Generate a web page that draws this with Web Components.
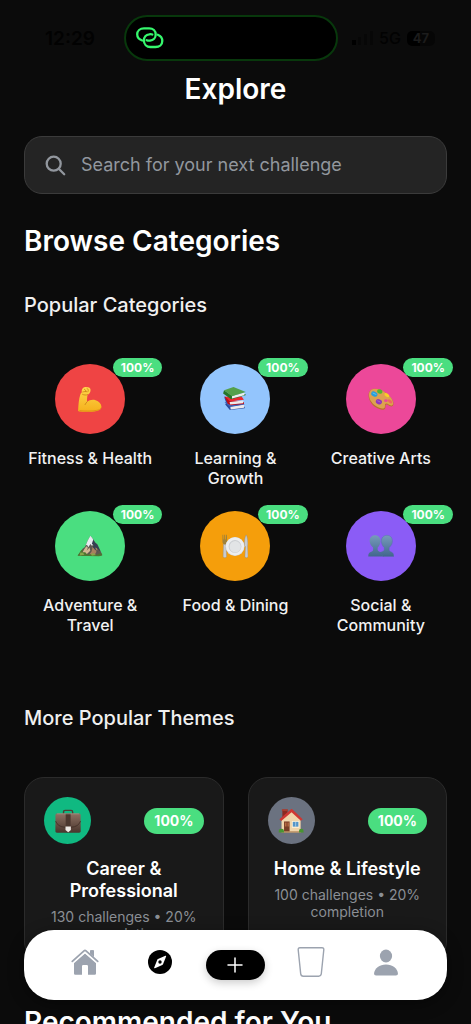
<!DOCTYPE html>
<html lang="en">
<head>
<meta charset="utf-8">
<meta name="viewport" content="width=device-width, initial-scale=1">
<title>Explore</title>
<style>
    html { scrollbar-width: none; background: #0b0b0b; }
    body {
        margin: 0;
        background: #0b0b0b;
        color: #fff;
        font-family: Inter, "Liberation Sans", sans-serif;
    }
</style>
</head>
<body>
<explore-page></explore-page>

<script>
const ART = {
    muscle: `
        <defs><linearGradient id="g" x1="0" y1="0" x2="0" y2="1">
            <stop offset="0" stop-color="#ffd84d"/><stop offset="1" stop-color="#f5b01c"/>
        </linearGradient></defs>
        <path fill="url(#g)" d="M6 2.600C7.400 1 10.600.6 13 1.600c1.500.7 1.900 2.400 1.400 4.300-.4 1.700-1.500 2.800-3 3.400-.5 2.700-.8 5.200-.5 7.700 2.400-1.900 5.800-2.700 9.100-1.700 3.600 1 6.100 3.700 6.300 6.700.2 2.500-1.900 4.200-5 4.800-5.800 1.100-13 1-19 .6-.9-.1-1.200-.7-1.100-1.600.4-6 .8-11.700 2.400-16.600.4-1.300 1-1.900 1.600-2.600-.3-1.400 0-2.800.8-4z"/>
        <path fill="none" stroke="#c47b12" stroke-width=".8" stroke-linecap="round" d="M6.300 6.400c1.500-.4 2.800-.7 4.500-.2M8 3.600c1 .2 1.600 1 1.400 2M10.800 2.600c1.300.6 1.700 1.700 1.200 3.200M6 9c1.800.9 3.800 1 5.300.3M10.900 17c-.9 1-1.600 1.700-2.200 3"/>
        <path fill="none" stroke="#dc9114" stroke-width=".9" stroke-linecap="round" d="M3 26.500c7 .7 13 .6 18.500-.3 2.200-.4 3.900-1.300 4.500-2.700"/>`,
    books: `
        <path fill="#294b9d" d="M2.200 11.500 4.500 18 3.500 20l5 5.900L24.500 24v-1.600L10 19z"/>
        <path fill="#e9e9ec" d="M9 22.200 23.800 20v3.300L9.300 25.200z"/>
        <path fill="#3d63bd" d="m2.700 17.500 6.200 5L24.600 20l-7-3.500z"/>
        <path fill="#b90e18" d="m2.600 11 3.500 8.200 3.600 1.500 14-1.300v-1.800L11 15z"/>
        <path fill="#eceaec" d="m8.200 17.200 14.600-1.700v3l-14 1.300z"/>
        <path fill="#ec2730" d="m3.600 11.700 4.600 4.800 15.400-1.800-2.500-3.500z"/>
        <path fill="#26752a" d="M2.200 4.700 1.200 8l8.600 6.400L25.300 10V8.700L10 10z"/>
        <path fill="#ededee" d="m10.800 10.600 13.700-3.200-.5 2.500-13.300 3.500z"/>
        <path fill="#54a04b" d="M2.200 4.700 12.400 1l13.200 5.500L10.700 11z"/>`,
    palette: `
        <path fill="#b8742b" d="M.8 8C1.800 3.700 6.300 1.800 11.500 3.500c6.400 2 13.200 7.500 15.300 12.700 1.300 3.200.4 6-2 5.800-2-.1-3.200-2.200-5-2-1.800.2-.4 2.400-1.300 4.200-1.200 2.300-5.900 1.500-10.300-1.300C3.200 19.700-.2 13 .8 8z"/>
        <path fill="#dda250" d="M1.200 7.600C2.200 3.500 6.600 2 11.600 3.600c6.200 1.900 12.800 7.200 14.900 12.200 1.200 3 .4 5.400-1.700 5.200-2.200-.2-3.200-2.300-5.200-2.100-2.200.3-.7 2.600-1.600 4.200-1.100 1.900-5.500 1.100-9.500-1.500C3.400 18.500.1 12.500 1.200 7.600z"/>
        <ellipse cx="19.300" cy="15.800" rx="2" ry="1.500" fill="#ec4899"/>
        <ellipse cx="6.800" cy="8.700" rx="3.500" ry="2.600" transform="rotate(25 6.800 8.700)" fill="#279edc"/>
        <ellipse cx="12.700" cy="5.900" rx="2.900" ry="2.300" transform="rotate(20 12.700 5.900)" fill="#55b52d"/>
        <ellipse cx="20.300" cy="9.800" rx="2.900" ry="1.700" transform="rotate(32 20.300 9.800)" fill="#f9cf25"/>
        <ellipse cx="23.700" cy="16.500" rx="2.800" ry="1.600" transform="rotate(38 23.700 16.500)" fill="#f26561"/>
        <ellipse cx="11.700" cy="17" rx="3.400" ry="2.700" transform="rotate(18 11.700 17)" fill="#8f37bb"/>
        <path fill="none" stroke="#6cc5f0" stroke-width=".9" d="m5 7.500 4 1.700"/>
        <path fill="none" stroke="#b66bd4" stroke-width=".8" d="m10 15.800 3.500 1.600"/>`,
    mountain: `
        <path fill="#5d5950" d="M.8 24.300 6 17l2.500-2 3.100-7L14.400 3l2.200 2.600 2.800 4.500 2.500 2.100 5.300 11.200-1.200 1.200z"/>
        <path fill="#e8ebf0" d="m14.400 3-2.800 5-2.300 5.500 1.500-.8 1.300 2.600 2.400-3.500 1.700 2.200 1.300-2.200 3 3.200-1.800-5-2.100-4.400z"/>
        <path fill="#d5b894" d="m10 14.200 1.800 1.800-1.500 3 3.200-3.400.8 3.400-4.500 4.500-5.500.3L7.500 18z"/>
        <path fill="#a7825f" d="m17 14 2 4 1.800-3.500 1.200 3.500-3 5.600h-6l2.800-4z"/>
        <path fill="#344052" d="m17.500 7 2 3.300 2.400 2.300 3.400 7.300-3.700-3.400-2.700-1.500 3.500 6-6-6.500 2-.8-2.400-2z"/>
        <path fill="#4e762f" d="m.6 24.400 4.200-6.200 1.800.4-1 2 3.300.2 2.200 2.300 6.100-.5 3.400 1 5.200-2 1.500 2.300-3.500 1.100z"/>
        <path fill="#88a64a" d="m3.500 21 3 .3 1.500 2.200-5 .7zM15 23l2.500-1.500 3 2.200-4.500.8z"/>`,
    plate: `
        <g fill="#c8cbd0" stroke="#83888e" stroke-width=".4">
            <path d="M1.600 11.700h2.700l.6 13.400c.1 1-.7 1.500-1.800 1.500s-2-.5-1.900-1.500z"/>
            <path d="M26 2c1.800 3.500 2.100 8.200 1.600 12.500l.4 10.600c0 1-.7 1.500-1.600 1.500-1 0-1.700-.5-1.700-1.500l.6-10.600h-1.200C24 9.300 24.500 5 26 2z"/>
        </g>
        <path fill="#9f823c" d="M.5 2h.8l.3 5h.7L2.400 2h1l.1 5h.7L4.500 2h.9v7.500c0 1.700-.8 2.800-2.300 2.800-1.700 0-2.600-1.200-2.600-2.800z"/>
        <circle cx="14" cy="14.500" r="10.200" fill="#cfd1d5"/>
        <circle cx="14" cy="14.300" r="9.800" fill="#edeef0"/>
        <circle cx="14" cy="14.500" r="6.900" fill="#cacdd1"/>
        <circle cx="14.200" cy="14.700" r="6.100" fill="#e2e4e6"/>`,
    people: `
        <defs><linearGradient id="g" x1="0" y1="0" x2="0" y2="1">
            <stop offset="0" stop-color="#779bbb"/><stop offset="1" stop-color="#42678d"/>
        </linearGradient></defs>
        <path fill="url(#g)" d="M7.500 2.500c3.800 0 6.200 2.700 5.900 6.700-.2 3-1.500 5-3 6.500v2.500c.4 1.700 3.500 1.900 5 3.200 1 .9 1.400 2 1.400 3.900H.3c0-2 .3-3.300 1.500-4.200 1.500-1.100 3.400-1.300 3.700-2.900v-2.500C3.700 14.200 2 12 1.800 9.200 1.600 5.200 3.800 2.500 7.500 2.500z"/>
        <path fill="url(#g)" stroke="#526aa9" stroke-width=".4" d="M20.400 2.500c3.900 0 6.100 2.700 5.900 6.700-.2 3-1.800 5-3.500 6.500v2.500c.3 1.600 2 1.700 3.300 2.800 1.100.9 1.700 2.200 1.700 4.300H16.300c-.8-2-3.600-2.700-3.800-4 1.500-1.200 4.700-1.400 5-3.100v-2.500c-1.600-1.400-2.900-3.500-3.100-6.500-.2-4 2.200-6.700 6-6.700z"/>`,
    briefcase: `
        <defs><linearGradient id="g" x1="0" y1="0" x2="0" y2="1">
            <stop offset="0" stop-color="#8d7163"/><stop offset="1" stop-color="#49352c"/>
        </linearGradient></defs>
        <path fill="none" stroke="#4f3c34" stroke-width="1.500" d="M9.200 6.500V4.200q0-1.700 1.700-1.700h6.400q1.700 0 1.700 1.700v2.300"/>
        <path fill="url(#g)" d="M2.300 6h23.500c1.200 0 1.700.7 1.800 1.900l.1 17c0 1.100-.6 1.700-1.700 1.700H2.100c-1.100 0-1.700-.6-1.700-1.700l.1-17C.6 6.700 1.200 6 2.300 6z"/>
        <path fill="none" stroke="#39271f" stroke-width=".7" d="M.6 14c1.500 4.300 5.300 6.600 10.200 6.700h6.600c4.900-.1 8.700-2.400 10.200-6.700"/>
        <path fill="#4c372e" d="M11.500 6h5.300v15h-5.300z"/>
        <path fill="#eee9e4" d="M11.300 20h5.800v3.700L14.200 26l-2.900-2.300z"/>
        <path fill="#ad958a" d="M2.300 6h23.500v.7H2.300z"/>`,
    house: `
        <path fill="#8b2a21" d="M4.700 2h5.500v8H4.700z"/>
        <path fill="#a83c2f" d="M4.200 1.300h6.400v2H4.200z"/>
        <path fill="#f0d5ab" d="M3.800 11.500 14.700 3l9.700 8.500V26H3.800z"/>
        <path fill="#ce3733" d="M1.500 12.200 13.700 1.500c.7-.5 1.200-.5 1.900 0l11 10.700-2 1.600-10-9.300L3.500 14z"/>
        <path fill="#783d25" d="M6.500 14.500h6V26h-6z"/>
        <path fill="#b86b43" d="M7.500 15.700h1.700v4.200H7.500zm2.700 0h1.500v4.200h-1.500z"/>
        <path fill="#fff3d9" d="M15 14h8v7.300h-8z"/>
        <path fill="#5495c9" d="M15.900 14.900H22v5.200h-6.100z"/>
        <path stroke="#dff0f5" stroke-width=".6" d="M19 15v5"/>
        <path fill="#bc9163" d="M3.800 25h20.800v1.500H3.800z"/>
        <path fill="#489432" d="M1 23.300c1.300-1.300 4-1.300 5.200 0l.3 3.200H.7zM22.800 23.500c1-1.500 3.500-1.500 4.500 0l.3 3h-5z"/>`
};

class ArtIcon extends HTMLElement {
    constructor() {
        super();
        const shadow = this.attachShadow({ mode: 'open' });
        shadow.innerHTML = `
            <style>
            :host { display: block; width: 26px; height: 26px; }
            svg { display: block; width: 100%; height: 100%; }
            </style>
            <svg viewBox="0 0 28 28" aria-hidden="true">${ART[this.getAttribute('name')] || ''}</svg>`;
    }
}

class StatusBar extends HTMLElement {
    constructor() {
        super();
        const shadow = this.attachShadow({ mode: 'open' });
        shadow.innerHTML = `
            <style>
            :host {
                display: grid;
                grid-template-columns: 1fr 214px 1fr;
                align-items: center;
                padding: 15px 9px 0 0;
                color: #020202;
            }
            .time { padding-left: 16px; text-align: center; font-size: 19px; font-weight: 600; }
            .island {
                box-sizing: border-box;
                height: 46px;
                padding-left: 9px;
                display: flex;
                align-items: center;
                border: 2px solid #08380c;
                border-radius: 23px;
                background: #000;
            }
            .right { display: flex; align-items: center; gap: 6px; padding-left: 14px; font-size: 16px; font-weight: 500; }
            .battery {
                width: 28px;
                border-radius: 5px;
                background: linear-gradient(90deg, #000 48%, #060606 48%);
                color: #1c1c1c;
                font-size: 13px;
                font-weight: 700;
                line-height: 15px;
                text-align: center;
            }
            svg { display: block; }
            </style>
            <div class="time">12:29</div>
            <div class="island">
                <svg width="30" height="24" viewBox="0 0 30 24" fill="none" stroke="#36f76d" stroke-width="2.300" stroke-linecap="round">
                    <path d="M7.200 14.500C4.200 13.500 2.200 11.200 2.200 8.300c0-3.500 2.900-6 6.700-6h5.300c3.900 0 6.500 2.700 6.500 6.200 0 3.400-2.300 5.900-5.700 6.200-1.500.1-2.500-.1-3.300-.5"/>
                    <path d="M17.300 8.500c-.9-.4-1.900-.4-3.100-.2-3.200.4-5.300 3-5.300 6.200 0 3.700 2.700 6.500 6.500 6.500h5.100c3.900 0 6.800-2.500 6.800-6 0-2.800-1.700-5.100-4.500-6.200"/>
                </svg>
            </div>
            <div class="right">
                <svg width="21" height="14" viewBox="0 0 21 14">
                    <path fill="#000" d="M0 9h4v5H0z"/>
                    <path fill="#070707" d="M6 6h3v8H6zM12 3h3v11h-3zM18 0h3v14h-3z"/>
                </svg>
                <span>5G</span>
                <span class="battery">47</span>
            </div>`;
    }
}

class SearchField extends HTMLElement {
    constructor() {
        super();
        const hint = this.getAttribute('placeholder') || '';
        const shadow = this.attachShadow({ mode: 'open' });
        shadow.innerHTML = `
            <style>
            :host { display: block; }
            label {
                box-sizing: border-box;
                height: 58px;
                padding: 0 20px;
                display: flex;
                align-items: center;
                gap: 15px;
                border: 1px solid #3b3b3b;
                border-radius: 18px;
                background: #242424;
            }
            svg { flex: none; }
            input {
                flex: 1;
                min-width: 0;
                padding: 0;
                border: 0;
                outline: 0;
                background: none;
                color: #fff;
                font: 400 18px/24px Inter, sans-serif;
            }
            input::placeholder { color: #92979e; opacity: 1; }
            </style>
            <label>
                <svg width="21" height="21" viewBox="0 0 21 21" fill="none" stroke="#92979e" stroke-width="2.300" stroke-linecap="round" aria-hidden="true">
                    <circle cx="8.700" cy="8.700" r="7"/><path d="m14 14 5.200 5.200"/>
                </svg>
                <input type="search" placeholder="${hint}" aria-label="${hint}">
            </label>`;
    }
}

class CategoryItem extends HTMLElement {
    constructor() {
        super();
        const shadow = this.attachShadow({ mode: 'open' });
        shadow.innerHTML = `
            <style>
            :host { display: block; }
            a {
                position: relative;
                display: flex;
                flex-direction: column;
                align-items: center;
                gap: 14px;
                color: #f2f2f2;
                text-align: center;
                text-decoration: none;
                font-size: 16px;
                font-weight: 500;
                line-height: 20px;
            }
            .disc {
                width: 70px;
                height: 70px;
                display: flex;
                align-items: center;
                justify-content: center;
                border-radius: 50%;
                background: ${this.getAttribute('color')};
            }
            .badge {
                position: absolute;
                top: -6px;
                right: -6px;
                padding: 0 8px;
                border-radius: 10px;
                background: #4ade80;
                color: #fff;
                font-size: 12px;
                font-weight: 700;
                line-height: 19px;
            }
            </style>
            <a href="#">
                <span class="disc"><art-icon name="${this.getAttribute('icon')}"></art-icon></span>
                <span class="badge">${this.getAttribute('progress')}</span>
                <span><slot></slot></span>
            </a>`;
    }
}

class ThemeCard extends HTMLElement {
    constructor() {
        super();
        const shadow = this.attachShadow({ mode: 'open' });
        shadow.innerHTML = `
            <style>
            :host {
                display: block;
                padding: 19px;
                border: 1px solid #2b2b2b;
                border-radius: 20px;
                background: #191919;
                text-align: center;
            }
            .top { display: flex; align-items: center; justify-content: space-between; margin-bottom: 14px; }
            .disc {
                width: 47px;
                height: 47px;
                display: flex;
                align-items: center;
                justify-content: center;
                border-radius: 50%;
                background: ${this.getAttribute('color')};
            }
            .badge {
                padding: 0 10px;
                border-radius: 13px;
                background: #4ade80;
                font-size: 14px;
                font-weight: 700;
                line-height: 26px;
            }
            h3 { margin: 0 0 6px; font-size: 18px; font-weight: 600; line-height: 22px; }
            p { margin: 0; color: #8b8f95; font-size: 14px; line-height: 17px; }
            </style>
            <div class="top">
                <span class="disc"><art-icon name="${this.getAttribute('icon')}"></art-icon></span>
                <span class="badge">${this.getAttribute('progress')}</span>
            </div>
            <h3><slot></slot></h3>
            <p><slot name="info"></slot></p>`;
    }
}

class TabBar extends HTMLElement {
    constructor() {
        super();
        const shadow = this.attachShadow({ mode: 'open' });
        shadow.innerHTML = `
            <style>
            :host {
                position: fixed;
                left: 24px;
                right: 24px;
                bottom: 24px;
                box-sizing: border-box;
                height: 70px;
                padding: 0 23px;
                border-radius: 30px;
                background: #fff;
                box-shadow: 0 4px 16px rgba(0, 0, 0, 0.4);
            }
            nav { height: 100%; display: grid; grid-template-columns: repeat(5, 1fr); align-items: center; justify-items: center; }
            a { display: block; padding-bottom: 6px; color: #9ca3af; }
            a.current { color: #000; }
            svg { display: block; }
            button {
                width: 59px;
                height: 30px;
                padding: 0;
                display: flex;
                align-items: center;
                justify-content: center;
                border: 0;
                border-radius: 15px;
                background: #000;
                color: #fff;
                box-shadow: 0 3px 8px rgba(0, 0, 0, 0.2);
            }
            </style>
            <nav>
                <a href="#" aria-label="Home">
                    <svg width="28" height="28" viewBox="0 0 28 28" fill="currentColor">
                        <path d="M14 5.300 25 14.300V25.400q0 1.300-1.300 1.300H17v-8.500q0-1.200-1.200-1.200h-3.600q-1.200 0-1.200 1.200v8.500H4.300Q3 26.700 3 25.400V14.300zM19 3.200q0-1 1-1h2q1 0 1 1v6.600l-4-3.300z"/>
                        <path fill="none" stroke="#fff" stroke-width="3.400" d="m1.500 14.300 12.500-11 12.500 11"/>
                        <path fill="none" stroke="currentColor" stroke-width="1.800" stroke-linecap="round" stroke-linejoin="round" d="M1.300 13.300 13 2.800q1-.9 2 0l11.700 10.500"/>
                        <path d="M19 3.200q0-1 1-1h2q1 0 1 1v5.500l-4-3.600z"/>
                    </svg>
                </a>
                <a href="#" class="current" aria-label="Explore">
                    <svg width="24" height="24" viewBox="0 0 24 24">
                        <circle cx="12" cy="12" r="12" fill="currentColor"/>
                        <path fill="#fff" d="M17.400 5.800q.9-.3.7.7l-3 7.600q-.2.500-.8.800l-7.400 3.300q-1 .3-.7-.7l3-7.600q.2-.5.800-.8z"/>
                        <circle cx="12" cy="12" r="1.700" fill="currentColor"/>
                    </svg>
                </a>
                <button type="button" aria-label="Add">
                    <svg width="16" height="16" viewBox="0 0 16 16" fill="none" stroke="currentColor" stroke-width="1.500" stroke-linecap="round"><path d="M8 1v14M1 8h14"/></svg>
                </button>
                <a href="#" aria-label="Bucket">
                    <svg width="28" height="30" viewBox="0 0 28 30" fill="none" stroke="currentColor" stroke-width="1.400">
                        <path d="M3 .8h22q2 0 1.800 2l-2.500 24q-.3 2.400-2.600 2.400H6.300q-2.300 0-2.600-2.400L1.200 2.800Q1 .8 3 .8z"/>
                    </svg>
                </a>
                <a href="#" aria-label="Profile">
                    <svg width="24" height="27" viewBox="0 0 24 27" fill="currentColor">
                        <ellipse cx="12" cy="7" rx="6.100" ry="6.500"/>
                        <path d="M12 15.500c6.600 0 11.200 3.700 11.900 8.500.2 1.700-.5 2.500-2 2.500H2.100C.6 26.500-.1 25.700.1 24c.7-4.800 5.300-8.500 11.900-8.500z"/>
                    </svg>
                </a>
            </nav>`;
    }
}

class ExplorePage extends HTMLElement {
    constructor() {
        super();
        const shadow = this.attachShadow({ mode: 'open' });
        shadow.innerHTML = `
            <style>
            :host { display: block; }
            main { padding: 0 24px 20px; }
            h1, h2, h3 { margin: 0; }
            h1 { margin: 11px 0 29px; text-align: center; font-size: 28px; font-weight: 600; line-height: 35px; }
            h2 { font-size: 28px; font-weight: 600; line-height: 36px; }
            h3 { color: #f0f0f0; font-size: 20px; font-weight: 500; line-height: 26px; }
            search-field { margin-bottom: 29px; }
            .popular { margin: 33px 0 46px; }
            .categories { display: grid; grid-template-columns: repeat(3, 1fr); gap: 23px 13px; }
            .more { margin: 70px 0 46px; }
            .themes { display: grid; grid-template-columns: repeat(2, 1fr); gap: 24px; margin-bottom: 42px; }
            </style>
            <status-bar></status-bar>
            <main>
                <h1>Explore</h1>
                <search-field placeholder="Search for your next challenge"></search-field>
                <h2>Browse Categories</h2>
                <h3 class="popular">Popular Categories</h3>
                <div class="categories">
                    <category-item icon="muscle" color="#ef4444" progress="100%">Fitness &amp; Health</category-item>
                    <category-item icon="books" color="#93c5fd" progress="100%">Learning &amp; Growth</category-item>
                    <category-item icon="palette" color="#ec4899" progress="100%">Creative Arts</category-item>
                    <category-item icon="mountain" color="#4ade80" progress="100%">Adventure &amp; Travel</category-item>
                    <category-item icon="plate" color="#f59e0b" progress="100%">Food &amp; Dining</category-item>
                    <category-item icon="people" color="#8b5cf6" progress="100%">Social &amp; Community</category-item>
                </div>
                <h3 class="more">More Popular Themes</h3>
                <div class="themes">
                    <theme-card icon="briefcase" color="#10b981" progress="100%">Career &amp; Professional<span slot="info">130 challenges • 20% completion</span></theme-card>
                    <theme-card icon="house" color="#6b7280" progress="100%">Home &amp; Lifestyle<span slot="info">100 challenges • 20% completion</span></theme-card>
                </div>
                <h2>Recommended for You</h2>
            </main>
            <tab-bar></tab-bar>`;
    }
}

customElements.define('art-icon', ArtIcon);
customElements.define('status-bar', StatusBar);
customElements.define('search-field', SearchField);
customElements.define('category-item', CategoryItem);
customElements.define('theme-card', ThemeCard);
customElements.define('tab-bar', TabBar);
customElements.define('explore-page', ExplorePage);
</script>
</body>
</html>
